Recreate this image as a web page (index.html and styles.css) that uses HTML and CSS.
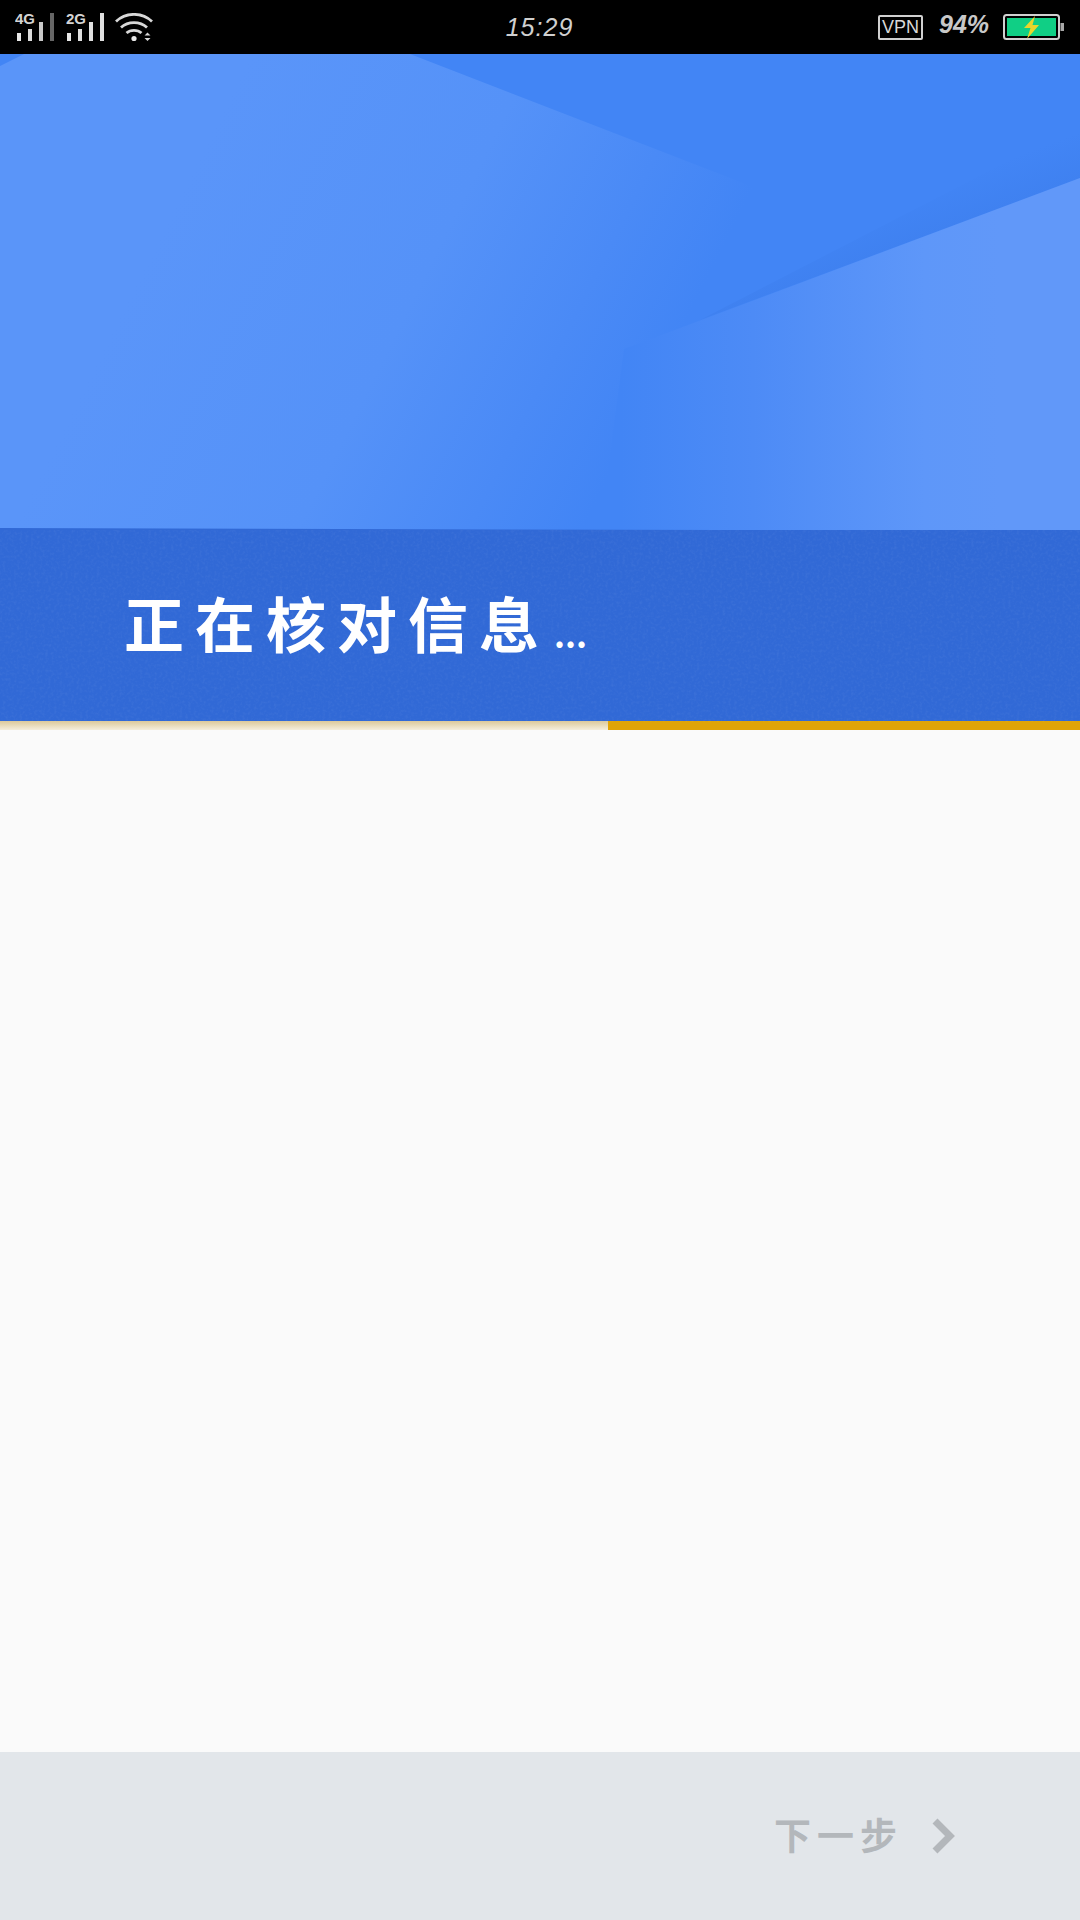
FILE: index.html
```html
<!DOCTYPE html>
<html lang="zh-CN">
<head>
    <meta charset="UTF-8">
    <meta name="viewport" content="width=device-width, initial-scale=1.0">
    <title>正在核对信息</title>
    <link rel="stylesheet" href="styles.css">
</head>
<body>
    <div class="screen">
        <!-- Status bar -->
        <div class="status-bar">
            <div class="status-left">
                <svg class="signal" width="42" height="36" viewBox="0 0 42 36">
                    <text class="signal-label" x="0" y="16">4G</text>
                    <rect x="2" y="25" width="4" height="8" fill="#e8e8e8"/>
                    <rect x="13" y="21" width="4" height="12" fill="#dcdcdc"/>
                    <rect x="24" y="14" width="4" height="19" fill="#c9c9c9"/>
                    <rect x="35" y="5" width="4" height="28" fill="#666"/>
                </svg>
                <svg class="signal" width="42" height="36" viewBox="0 0 42 36">
                    <text class="signal-label" x="1" y="16">2G</text>
                    <rect x="2" y="25" width="4" height="8" fill="#e8e8e8"/>
                    <rect x="13" y="21" width="4" height="12" fill="#e0e0e0"/>
                    <rect x="24" y="14" width="4" height="19" fill="#e0e0e0"/>
                    <rect x="35" y="5" width="4" height="28" fill="#e0e0e0"/>
                </svg>
                <svg class="wifi" width="38" height="30" viewBox="0 0 38 30">
                    <path d="M1 8.5 C11 -1 27 -1 37 8.5" fill="none" stroke="#d8d8d8" stroke-width="2.8"/>
                    <path d="M6 14.5 C13 8 25 8 32 14.5" fill="none" stroke="#d8d8d8" stroke-width="2.8"/>
                    <path d="M11.5 20 C15.5 16.5 22.5 16.5 26.5 20" fill="none" stroke="#d8d8d8" stroke-width="2.8"/>
                    <circle cx="19" cy="25.5" r="2.6" fill="#e8e8e8"/>
                    <path d="M29.5 22.5 L32.5 19.5 L35.5 22.5 Z M29.5 25 L35.5 25 L32.5 28 Z" fill="#d8d8d8"/>
                </svg>
            </div>
            <div class="status-time">15:29</div>
            <div class="status-right">
                <span class="vpn">VPN</span>
                <span class="percent">94%</span>
                <svg class="battery" width="61" height="26" viewBox="0 0 61 26">
                    <rect x="1" y="1" width="55" height="24" rx="2.5" fill="none" stroke="#d0d0d0" stroke-width="2"/>
                    <rect x="4" y="4" width="49" height="18" fill="#10cf85"/>
                    <rect x="57.5" y="9" width="3.5" height="8" fill="#a8a8a8"/>
                    <path d="M32 2 L21 14 L27.5 14 L24 25 L36 11 L29.5 11 Z" fill="#e9d52c"/>
                </svg>
            </div>
        </div>

        <!-- Header -->
        <div class="hero">
            <svg class="hero-art" width="1080" height="476" viewBox="0 0 1080 476">
                <defs>
                    <linearGradient id="leftShape" gradientUnits="userSpaceOnUse" x1="200" y1="100" x2="656" y2="328">
                        <stop offset="0" stop-color="#5a95f9"/>
                        <stop offset="0.5" stop-color="#5592f8"/>
                        <stop offset="0.8" stop-color="#4a8af6"/>
                        <stop offset="1" stop-color="#4285f5"/>
                    </linearGradient>
                    <linearGradient id="rightShape" gradientUnits="userSpaceOnUse" x1="620" y1="0" x2="1000" y2="0">
                        <stop offset="0" stop-color="#4285f5"/>
                        <stop offset="0.35" stop-color="#4d8bf6"/>
                        <stop offset="0.8" stop-color="#5e97f9"/>
                        <stop offset="1" stop-color="#6198f9"/>
                    </linearGradient>
                    <linearGradient id="cornerShade" gradientUnits="userSpaceOnUse" x1="885" y1="151" x2="900" y2="191">
                        <stop offset="0" stop-color="#3a7ae8" stop-opacity="0"/>
                        <stop offset="1" stop-color="#3a7ae8" stop-opacity="0.35"/>
                    </linearGradient>
                </defs>
                <rect width="1080" height="476" fill="#4285f5"/>
                <polygon points="0,0 410,0 800,151 800,476 0,476" fill="url(#leftShape)"/>
                <polygon points="0,0 24,0 0,12" fill="#4285f5"/>
                <polygon points="1080,70 700,266 1080,124" fill="url(#cornerShade)"/>
                <polygon points="1080,124 624,295 600,476 1080,476" fill="url(#rightShape)"/>
                <polygon points="0,474 1080,477 0,477" fill="#3169d6"/>
            </svg>
        </div>

        <div class="notice">
            <svg class="grain" width="1080" height="192">
                <filter id="grainNoise">
                    <feTurbulence type="fractalNoise" baseFrequency="0.35" numOctaves="2" seed="4"/>
                    <feColorMatrix values="0 0 0 0 1  0 0 0 0 1  0 0 0 0 1  0 0 0 1.4 -0.6"/>
                </filter>
                <rect width="1080" height="192" filter="url(#grainNoise)" opacity="0.07"/>
            </svg>
            <h1 class="notice-title">正在核对信息<span class="dots">...</span></h1>
        </div>

        <!-- Progress -->
        <div class="progress">
            <div class="progress-track"></div>
            <div class="progress-bar"></div>
        </div>

        <div class="content"></div>

        <!-- Footer -->
        <div class="footer">
            <span class="next">下一步</span>
            <svg class="chevron" width="24" height="36" viewBox="0 0 24 36">
                <path d="M3 3 L18 18 L3 33" fill="none" stroke="#b3b7bb" stroke-width="7"/>
            </svg>
        </div>
    </div>
</body>
</html>
```

FILE: styles.css
```css
* {
    box-sizing: border-box;
}
body {
    margin: 0;
    background-color: #000;
    font-family: "Noto Sans CJK SC", "Noto Sans", sans-serif;
}
.screen {
    width: 1080px;
    height: 1920px;
    display: flex;
    flex-direction: column;
    overflow: hidden;
}
.status-bar {
    height: 54px;
    flex: none;
    background-color: #000;
    display: grid;
    grid-template-columns: 1fr auto 1fr;
    align-items: center;
    padding: 0 16px 0 15px;
    color: #d8d8d8;
}
.status-left {
    display: flex;
    align-items: flex-start;
    gap: 8px;
    padding-top: 8px;
    height: 54px;
}
.signal {
    display: block;
}
.signal-label {
    font-family: "Liberation Sans", sans-serif;
    font-size: 15px;
    font-weight: bold;
    fill: #d4d4d4;
}
.wifi {
    display: block;
    margin-top: 5px;
}
.status-time {
    font-family: "Liberation Sans", sans-serif;
    font-style: italic;
    font-size: 25px;
    letter-spacing: 1px;
    color: #d0d0d0;
}
.status-right {
    display: flex;
    align-items: center;
    justify-content: flex-end;
}
.vpn {
    width: 45px;
    height: 25px;
    border: 2px solid #d0d0d0;
    border-radius: 2px;
    font-family: "Liberation Sans", sans-serif;
    font-size: 18px;
    line-height: 21px;
    text-align: center;
    margin-right: 16px;
}
.percent {
    width: 64px;
    font-family: "Liberation Sans", sans-serif;
    font-style: italic;
    font-weight: bold;
    font-size: 25px;
    margin-top: -5px;
    color: #c8c8c8;
}
.battery {
    display: block;
}
.hero {
    height: 476px;
    flex: none;
}
.hero-art {
    display: block;
}
.notice {
    position: relative;
    height: 191px;
    flex: none;
    background-color: #3169d6;
    display: flex;
    align-items: center;
    padding: 0 0 8px 124px;
}
.grain {
    position: absolute;
    top: 0;
    left: 0;
}
.notice-title {
    position: relative;
    margin: 0;
    font-size: 60px;
    font-weight: 700;
    letter-spacing: 11px;
    line-height: 1;
    color: #fff;
}
.dots {
    font-size: 34px;
    letter-spacing: 0;
    margin-left: 4px;
}
.progress {
    height: 9px;
    flex: none;
    display: flex;
}
.progress-track {
    width: 608px;
    background: linear-gradient(#dcc99a, #f5eedc);
}
.progress-bar {
    flex: 1;
    background-color: #e0a407;
}
.content {
    flex: 1;
    background-color: #fafafa;
}
.footer {
    height: 168px;
    flex: none;
    background-color: #e2e6ea;
    display: flex;
    align-items: center;
    justify-content: flex-end;
    padding: 0 124px 0 0;
    gap: 35px;
}
.next {
    font-size: 37px;
    font-weight: 700;
    letter-spacing: 6px;
    color: #b3b7bb;
    margin-right: -6px;
    margin-bottom: 4px;
}
.chevron {
    display: block;
}
```
